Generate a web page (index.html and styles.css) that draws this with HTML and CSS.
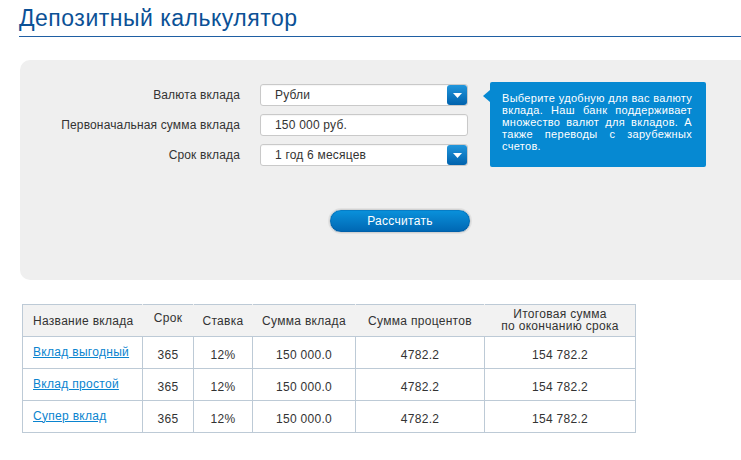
FILE: index.html
```html
<!DOCTYPE html>
<html lang="ru">
<head>
<meta charset="utf-8">
<title>Депозитный калькулятор</title>
<link rel="stylesheet" href="styles.css">
</head>
<body>
<div class="page">
  <h1 class="title">Депозитный калькулятор</h1>

  <section class="panel">
    <div class="panel-top">
      <div class="form">
        <div class="row">
          <label class="label">Валюта вклада</label>
          <div class="field select">
            <span class="value">Рубли</span>
            <span class="arrow"><svg width="9" height="5" viewBox="0 0 9 5"><path d="M0 0H9L4.5 5Z" fill="#fff"/></svg></span>
          </div>
        </div>
        <div class="row">
          <label class="label">Первоначальная сумма вклада</label>
          <div class="field">
            <span class="value">150 000 руб.</span>
          </div>
        </div>
        <div class="row">
          <label class="label">Срок вклада</label>
          <div class="field select">
            <span class="value">1 год 6 месяцев</span>
            <span class="arrow"><svg width="9" height="5" viewBox="0 0 9 5"><path d="M0 0H9L4.5 5Z" fill="#fff"/></svg></span>
          </div>
        </div>
      </div>
      <div class="tip">Выберите удобную для вас валюту вклада. Наш банк поддерживает множество валют для вкладов. А также переводы с зарубежных счетов.</div>
    </div>
    <div class="actions">
      <button class="btn" type="button">Рассчитать</button>
    </div>
  </section>

  <table class="results">
    <colgroup>
      <col class="c1"><col class="c2"><col class="c3"><col class="c4"><col class="c5"><col class="c6">
    </colgroup>
    <thead>
      <tr>
        <th class="name">Название вклада</th>
        <th>Срок</th>
        <th>Ставка</th>
        <th>Сумма вклада</th>
        <th>Сумма процентов</th>
        <th class="two">Итоговая сумма<br>по окончанию срока</th>
      </tr>
    </thead>
    <tbody>
      <tr>
        <td class="name"><a href="#">Вклад выгодный</a></td>
        <td>365</td><td>12%</td><td>150 000.0</td><td>4782.2</td><td>154 782.2</td>
      </tr>
      <tr>
        <td class="name"><a href="#">Вклад простой</a></td>
        <td>365</td><td>12%</td><td>150 000.0</td><td>4782.2</td><td>154 782.2</td>
      </tr>
      <tr>
        <td class="name"><a href="#">Супер вклад</a></td>
        <td>365</td><td>12%</td><td>150 000.0</td><td>4782.2</td><td>154 782.2</td>
      </tr>
    </tbody>
  </table>
</div>
</body>
</html>
```
FILE: styles.css
```css
* { box-sizing: border-box; }
html, body { margin: 0; padding: 0; background: #fff; }
body {
  font-family: "Liberation Sans", Arial, sans-serif;
  font-size: 12px;
  color: #333;
  overflow: hidden;
}
.page { padding: 0 0 0 19px; }

.title {
  margin: 0;
  padding-top: 5px;
  height: 37px;
  font-weight: normal;
  font-size: 23px;
  line-height: 26px;
  letter-spacing: 0.5px;
  color: #0b5196;
  border-bottom: 1px solid #1f5fa3;
}

.panel {
  margin: 23px 0 0 1px;
  height: 220px;
  background: #efefef;
  border-radius: 10px 0 0 10px;
  padding: 22px 0 0 20px;
}
.panel-top { display: flex; align-items: flex-start; }
.form { display: flex; flex-direction: column; gap: 8px; padding-top: 2px; }
.row { display: flex; align-items: center; }
.label {
  width: 200px;
  text-align: right;
  margin-right: 20px;
  color: #333;
  letter-spacing: 0.15px;
}
.field {
  width: 208px;
  height: 22px;
  background: #fff;
  border: 1px solid #c9c9c9;
  border-radius: 3px;
  display: flex;
  align-items: center;
  justify-content: space-between;
  padding: 0 0 0 14px;
  box-shadow: inset 0 1px 1px rgba(0,0,0,0.04);
}
.value { letter-spacing: 0.2px; }
.arrow {
  width: 20px;
  height: 20px;
  border-radius: 3px;
  background: linear-gradient(#2196dc, #0062ad);
  display: flex;
  align-items: center;
  justify-content: center;
}

.tip {
  position: relative;
  margin-left: 22px;
  width: 216px;
  height: 85px;
  background: #0689d2;
  color: #fff;
  font-size: 11px;
  line-height: 12px;
  letter-spacing: 0.3px;
  text-align: justify;
  padding: 10px 14px 0 12px;
  border-radius: 2px;
}
.tip::before {
  content: "";
  position: absolute;
  left: -7px;
  top: 8px;
  border-style: solid;
  border-width: 6px 7px 6px 0;
  border-color: transparent #0689d2 transparent transparent;
}

.actions { padding: 42px 0 0 289px; }
.btn {
  width: 142px;
  height: 24px;
  border: 1px solid #d2d2d2;
  border-radius: 12px;
  padding: 0;
  background: linear-gradient(#0a92dc, #0066b2);
  box-shadow: 0 0 0 1px #e2e2e2, inset 0 0 0 1px rgba(0,80,150,0.3);
  color: #fff;
  font-family: "Liberation Sans", Arial, sans-serif;
  font-size: 12px;
  letter-spacing: 0.3px;
  cursor: pointer;
}

.results {
  margin: 24px 0 0 3px;
  border-collapse: collapse;
  width: 613px;
  table-layout: fixed;
}
.c1 { width: 120px; } .c2 { width: 51px; } .c3 { width: 59px; }
.c4 { width: 103px; } .c5 { width: 129px; } .c6 { width: 151px; }
.results th, .results td {
  border: 1px solid #bdcad6;
  text-align: center;
  font-weight: normal;
  letter-spacing: 0.3px;
  padding: 0;
}
.results th {
  height: 32px;
  background: #f2f2f2;
  border-left-color: #f2f2f2;
  border-right-color: #f2f2f2;
  line-height: 12px;
}
.results th:first-child { border-left-color: #bdcad6; }
.results th:last-child { border-right-color: #bdcad6; }
.results th:nth-child(2) { padding-bottom: 5px; }
.results th.two { padding-bottom: 1px; }
.results td { height: 32px; padding-top: 4px; }
.results .name { text-align: left; padding-left: 10px; }
.results td.name { padding-top: 0; padding-bottom: 2px; }
.results a { color: #0a84cf; text-decoration: underline; }
```
